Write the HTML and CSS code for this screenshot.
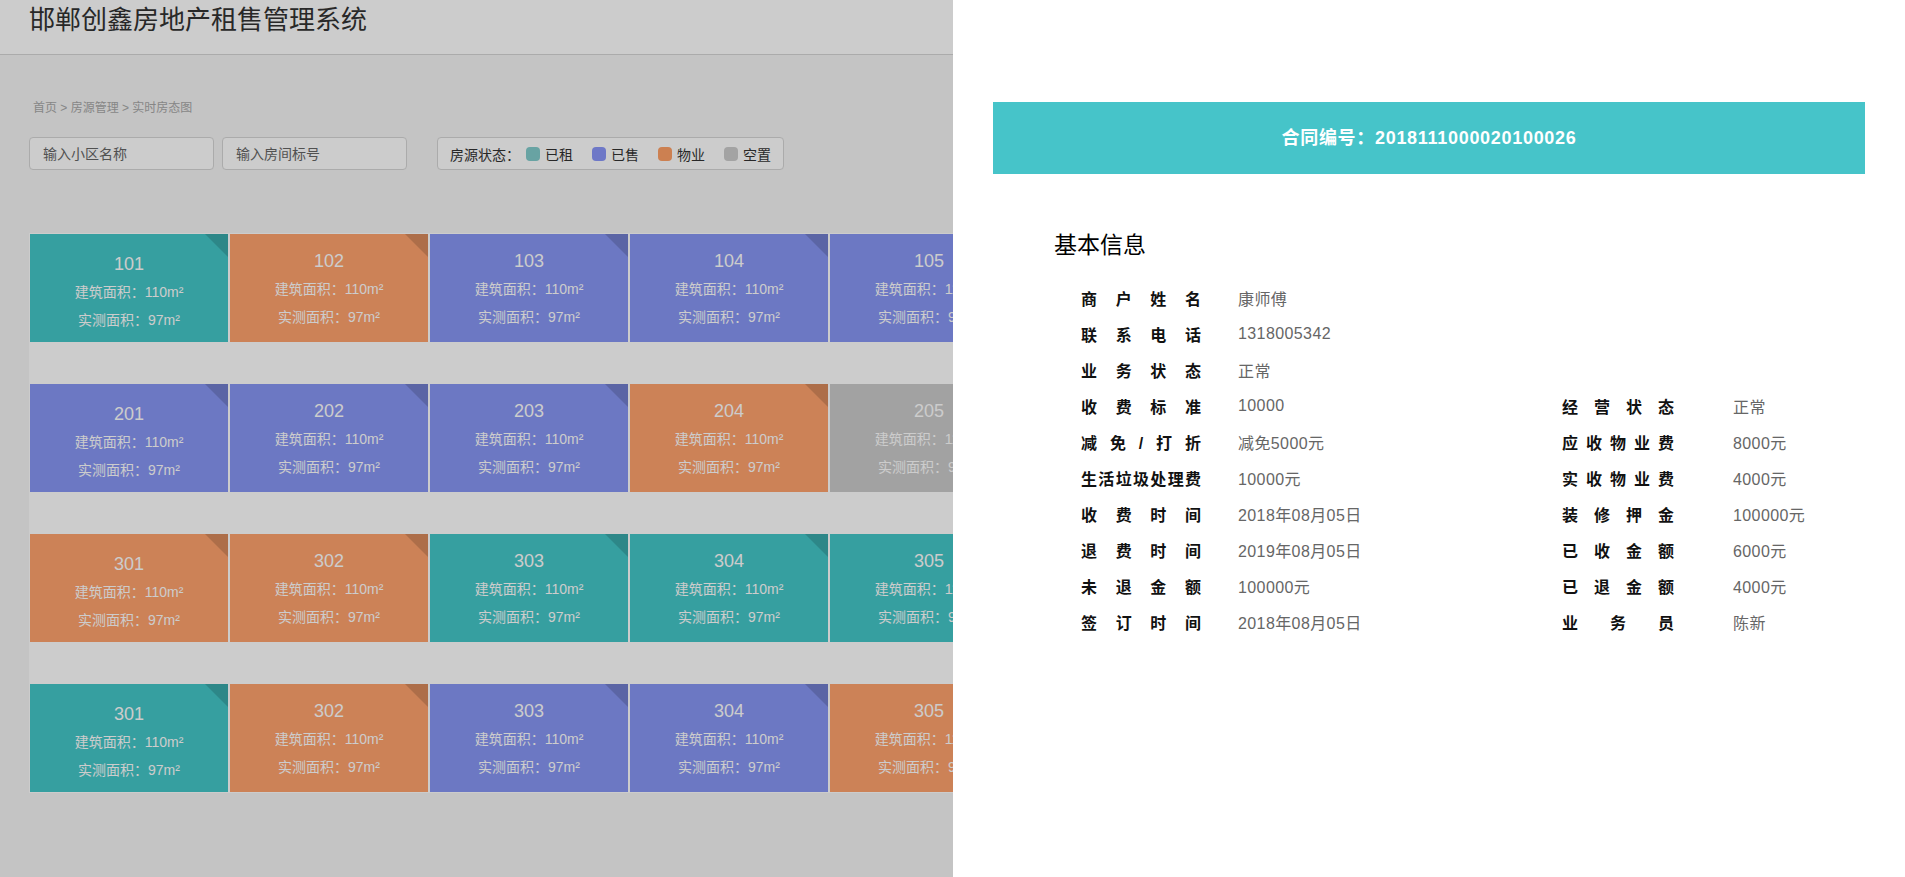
FILE: index.html
```html
<!DOCTYPE html>
<html lang="zh-CN">
<head>
<meta charset="utf-8">
<title>邯郸创鑫房地产租售管理系统</title>
<link rel="stylesheet" href="styles.css">
</head>
<body>
<header class="topbar">
  <h1 class="app-title">邯郸创鑫房地产租售管理系统</h1>
</header>
<main class="page">
  <div class="crumbs">首页 &gt; 房源管理 &gt; 实时房态图</div>
  <div class="filters">
    <input class="field" type="text" placeholder="输入小区名称">
    <input class="field" type="text" placeholder="输入房间标号">
    <div class="legend">
      <span class="legend-label">房源状态：</span>
      <span class="legend-item"><i class="dot dot-rent"></i>已租</span>
      <span class="legend-item"><i class="dot dot-sold"></i>已售</span>
      <span class="legend-item"><i class="dot dot-prop"></i>物业</span>
      <span class="legend-item"><i class="dot dot-empty"></i>空置</span>
    </div>
  </div>
  <section class="rooms">
    <div class="room room-first teal"><div class="no">101</div><div class="ln">建筑面积：110m²</div><div class="ln">实测面积：97m²</div></div>
    <div class="room orange"><div class="no">102</div><div class="ln">建筑面积：110m²</div><div class="ln">实测面积：97m²</div></div>
    <div class="room blue"><div class="no">103</div><div class="ln">建筑面积：110m²</div><div class="ln">实测面积：97m²</div></div>
    <div class="room blue"><div class="no">104</div><div class="ln">建筑面积：110m²</div><div class="ln">实测面积：97m²</div></div>
    <div class="room blue"><div class="no">105</div><div class="ln">建筑面积：110m²</div><div class="ln">实测面积：97m²</div></div>

    <div class="room room-first blue"><div class="no">201</div><div class="ln">建筑面积：110m²</div><div class="ln">实测面积：97m²</div></div>
    <div class="room blue"><div class="no">202</div><div class="ln">建筑面积：110m²</div><div class="ln">实测面积：97m²</div></div>
    <div class="room blue"><div class="no">203</div><div class="ln">建筑面积：110m²</div><div class="ln">实测面积：97m²</div></div>
    <div class="room orange"><div class="no">204</div><div class="ln">建筑面积：110m²</div><div class="ln">实测面积：97m²</div></div>
    <div class="room gray"><div class="no">205</div><div class="ln">建筑面积：110m²</div><div class="ln">实测面积：97m²</div></div>

    <div class="room room-first orange"><div class="no">301</div><div class="ln">建筑面积：110m²</div><div class="ln">实测面积：97m²</div></div>
    <div class="room orange"><div class="no">302</div><div class="ln">建筑面积：110m²</div><div class="ln">实测面积：97m²</div></div>
    <div class="room teal"><div class="no">303</div><div class="ln">建筑面积：110m²</div><div class="ln">实测面积：97m²</div></div>
    <div class="room teal"><div class="no">304</div><div class="ln">建筑面积：110m²</div><div class="ln">实测面积：97m²</div></div>
    <div class="room teal"><div class="no">305</div><div class="ln">建筑面积：110m²</div><div class="ln">实测面积：97m²</div></div>

    <div class="room room-first teal"><div class="no">301</div><div class="ln">建筑面积：110m²</div><div class="ln">实测面积：97m²</div></div>
    <div class="room orange"><div class="no">302</div><div class="ln">建筑面积：110m²</div><div class="ln">实测面积：97m²</div></div>
    <div class="room blue"><div class="no">303</div><div class="ln">建筑面积：110m²</div><div class="ln">实测面积：97m²</div></div>
    <div class="room blue"><div class="no">304</div><div class="ln">建筑面积：110m²</div><div class="ln">实测面积：97m²</div></div>
    <div class="room orange"><div class="no">305</div><div class="ln">建筑面积：110m²</div><div class="ln">实测面积：97m²</div></div>
  </section>
</main>

<div class="mask"></div>

<aside class="drawer">
  <div class="contract-bar">合同编号：2018111000020100026</div>
  <h2 class="info-title">基本信息</h2>
  <div class="info">
    <dl class="info-col info-left">
      <div class="cell"><dt>商户姓名</dt><dd>康师傅</dd></div>
      <div class="cell"><dt>联系电话</dt><dd>1318005342</dd></div>
      <div class="cell"><dt>业务状态</dt><dd>正常</dd></div>
      <div class="cell"><dt>收费标准</dt><dd>10000</dd></div>
      <div class="cell"><dt>减免/打折</dt><dd>减免5000元</dd></div>
      <div class="cell"><dt>生活垃圾处理费</dt><dd>10000元</dd></div>
      <div class="cell"><dt>收费时间</dt><dd>2018年08月05日</dd></div>
      <div class="cell"><dt>退费时间</dt><dd>2019年08月05日</dd></div>
      <div class="cell"><dt>未退金额</dt><dd>100000元</dd></div>
      <div class="cell"><dt>签订时间</dt><dd>2018年08月05日</dd></div>
    </dl>
    <dl class="info-col info-right">
      <div class="cell"><dt>经营状态</dt><dd>正常</dd></div>
      <div class="cell"><dt>应收物业费</dt><dd>8000元</dd></div>
      <div class="cell"><dt>实收物业费</dt><dd>4000元</dd></div>
      <div class="cell"><dt>装修押金</dt><dd>100000元</dd></div>
      <div class="cell"><dt>已收金额</dt><dd>6000元</dd></div>
      <div class="cell"><dt>已退金额</dt><dd>4000元</dd></div>
      <div class="cell"><dt>业务员</dt><dd>陈新</dd></div>
    </dl>
  </div>
</aside>
</body>
</html>
```
FILE: styles.css
```css
* { box-sizing: border-box; }

html, body {
  margin: 0;
  padding: 0;
}

body {
  background: #f5f5f5;
  font-family: "Liberation Sans", "Noto Sans CJK SC", sans-serif;
  color: #333;
  overflow: hidden;
}

.topbar {
  height: 55px;
  background: #ffffff;
  border-bottom: 1px solid #d6d6d6;
  padding: 5px 0 0 29px;
}

.app-title {
  margin: 0;
  font-size: 26px;
  line-height: 30px;
  font-weight: 400;
  color: #333;
}

.page {
  padding: 0 0 0 29px;
}

.crumbs {
  margin-top: 45px;
  padding-left: 4px;
  font-size: 12px;
  line-height: 16px;
  color: #a8a8a8;
}

.filters {
  margin-top: 21px;
  display: flex;
  align-items: center;
}

.field {
  flex: none;
  width: 185px;
  height: 33px;
  border: 1px solid #d6d6d6;
  border-radius: 4px;
  background: #fff;
  padding: 0 0 0 13px;
  margin: 0 8px 0 0;
  font-family: inherit;
  font-size: 14px;
  color: #666;
  outline: none;
}

.field::placeholder { color: #666; }

.legend {
  flex: none;
  margin-left: 22px;
  width: 347px;
  height: 33px;
  border: 1px solid #d6d6d6;
  border-radius: 4px;
  background: #fff;
  display: flex;
  align-items: center;
  padding-left: 12px;
  font-size: 14px;
  color: #333;
  white-space: nowrap;
}

.legend-label {
  flex: none;
  margin-right: 6px;
}

.legend-item {
  flex: none;
  display: flex;
  align-items: center;
  margin-right: 19px;
}

.dot {
  flex: none;
  display: inline-block;
  width: 14px;
  height: 14px;
  border-radius: 4px;
  margin-right: 5px;
}

.dot-rent { background: #82cccc; }
.dot-sold { background: #8a97f9; }
.dot-prop { background: #ffa166; }
.dot-empty { background: #cccccc; }

.rooms {
  margin-top: 63px;
  background: #ffffff;
  padding: 1px;
  display: grid;
  grid-template-columns: repeat(5, 198px);
  column-gap: 2px;
  row-gap: 42px;
}

.room {
  position: relative;
  height: 108px;
  padding-top: 15px;
  text-align: center;
  color: #ffffff;
  overflow: hidden;
}

.room::after {
  content: "";
  position: absolute;
  top: 0;
  right: 0;
  width: 0;
  height: 0;
  border-top: 23px solid rgba(0, 0, 0, 0.15);
  border-left: 23px solid transparent;
}

.room-first { padding-top: 18px; }

.room .no {
  font-size: 18px;
  line-height: 24px;
  margin-bottom: 2px;
}

.room .ln {
  font-size: 14px;
  line-height: 28px;
}

.teal { background: #44c7c8; }
.orange { background: #ffa36d; }
.blue { background: #8796f4; }
.gray { background: #cbcbcb; }

.mask {
  position: fixed;
  left: 0;
  top: 0;
  right: 0;
  bottom: 0;
  background: rgba(0, 0, 0, 0.2);
  z-index: 10;
}

.drawer {
  position: fixed;
  top: 0;
  right: 0;
  bottom: 0;
  width: 952px;
  background: #ffffff;
  z-index: 20;
  padding: 102px 40px 0 40px;
}

.contract-bar {
  height: 72px;
  line-height: 72px;
  background: #46c4c9;
  color: #ffffff;
  text-align: center;
  font-size: 18px;
  font-weight: 700;
  letter-spacing: 0.7px;
}

.info-title {
  margin: 55px 0 0 61px;
  font-size: 23px;
  line-height: 32px;
  font-weight: 400;
  color: #000;
}

.info {
  margin-top: 19px;
  padding-left: 88px;
  display: flex;
}

.info-col {
  margin: 0;
  padding: 0;
}

.info-left { width: 481px; }

.info-right { padding-top: 108px; }

.cell {
  display: flex;
  align-items: center;
  height: 36px;
}

.cell dt {
  width: 120px;
  font-size: 16px;
  font-weight: 600;
  color: #111;
  text-align: justify;
  text-align-last: justify;
}

.cell dd {
  margin: 0 0 0 37px;
  font-size: 16px;
  color: #666;
  letter-spacing: 0.4px;
}

.info-right .cell dt { width: 112px; }
.info-right .cell dd { margin-left: 59px; }
```
